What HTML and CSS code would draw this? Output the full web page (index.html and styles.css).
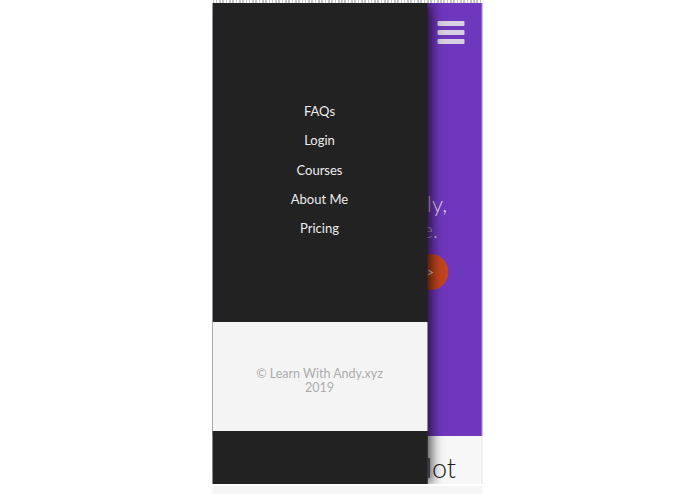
FILE: index.html
```html
<!DOCTYPE html>
<html lang="en">
<head>
<meta charset="utf-8">
<title>Learn With Andy.xyz</title>
<link rel="stylesheet" href="styles.css">
</head>
<body>
<div class="device">
  <div class="topline"></div>
  <div class="screen">
    <div class="page">
      <section class="hero">
        <div class="hero-bar">
          <button class="burger" aria-label="Menu"><span></span><span></span><span></span></button>
        </div>
        <div class="hero-text">
          <p class="line1">quickly,</p>
          <p class="line2">pace.</p>
        </div>
        <div class="hero-cta">
          <a class="cta" href="#">Go &gt;</a>
        </div>
      </section>
      <section class="strip">
        <p class="strip-text">a lot</p>
      </section>
    </div>
    <aside class="drawer">
      <nav class="drawer-nav">
        <a href="#">FAQs</a>
        <a href="#">Login</a>
        <a href="#">Courses</a>
        <a href="#">About Me</a>
        <a href="#">Pricing</a>
      </nav>
      <footer class="drawer-footer">
        <p>© Learn With Andy.xyz<br>2019</p>
      </footer>
      <div class="drawer-end"></div>
    </aside>
  </div>
  <div class="bottomline"></div>
</div>
</body>
</html>
```
FILE: styles.css
```css
html, body {
  margin: 0;
  padding: 0;
  background: #ffffff;
  font-family: "Lato", "Open Sans", sans-serif;
}

.device {
  width: 270px;
  margin: 0 auto;
  transform: translateX(-0.5px);
}

.topline {
  height: 3px;
  background: repeating-linear-gradient(90deg, #c4c4c4 0 1.6px, #ffffff 1.6px 3.3px);
}

.screen {
  position: relative;
  height: 481px;
  overflow: hidden;
  background: #f7f7f7;
}

.page {
  display: flex;
  flex-direction: column;
  height: 100%;
}

.hero {
  height: 433px;
  background: #6f37bd;
  border-right: 1px solid #a88ae0;
  display: flex;
  flex-direction: column;
  box-sizing: border-box;
}

.hero-bar {
  display: flex;
  justify-content: flex-end;
  padding: 18px 17px 0 0;
}

.burger {
  display: flex;
  flex-direction: column;
  gap: 4px;
  width: 27px;
  padding: 0;
  border: 0;
  background: none;
}

.burger span {
  display: block;
  height: 5px;
  background: #d6d0e2;
  border-radius: 1px;
}

.hero-text {
  margin-top: 147px;
  text-align: right;
  font-size: 22px;
  line-height: 26px;
  font-weight: 300;
}

.hero-text p {
  margin: 0;
  white-space: nowrap;
}

.line1 { color: #e6def4; padding-right: 34px; }
.line2 { color: #c6b4e8; padding-right: 43px; }

.hero-cta {
  display: flex;
  justify-content: flex-end;
  margin-top: 11px;
  padding-right: 33px;
}

.cta {
  display: flex;
  align-items: center;
  height: 36px;
  padding: 0 14px 0 20px;
  border-radius: 18px;
  background: #c2451e;
  color: #f3e2dc;
  font-size: 13px;
  text-decoration: none;
  white-space: nowrap;
}

.strip {
  flex: 1;
  background: #f7f7f7;
  border-right: 1px solid #e4e4e4;
  display: flex;
  justify-content: flex-end;
}

.strip-text {
  margin: 16px 25px 0 0;
  font-size: 27px;
  line-height: 32px;
  font-weight: 300;
  color: #1e1e1e;
  white-space: nowrap;
}

.drawer {
  position: absolute;
  left: 0;
  top: 0;
  bottom: 0;
  width: 215px;
  background: #222222;
  display: flex;
  flex-direction: column;
  box-shadow: 3px 0 12px rgba(0, 0, 0, 0.75);
}

.drawer-nav {
  height: 319px;
  box-sizing: border-box;
  padding-top: 100px;
  display: flex;
  flex-direction: column;
  align-items: center;
  gap: 13.3px;
}

.drawer-nav a {
  display: block;
  color: #ececec;
  font-size: 13px;
  line-height: 16px;
  text-decoration: none;
}

.drawer-footer {
  height: 109px;
  background: #f4f4f4;
  box-sizing: border-box;
  padding-top: 45px;
  text-align: center;
}

.drawer-footer p {
  margin: 0;
  color: #acacac;
  font-size: 12.5px;
  line-height: 14px;
}

.drawer-end {
  flex: 1;
  background: #222222;
}

.bottomline {
  height: 8px;
  margin-top: 2px;
  background: #f5f5f5;
}
```
